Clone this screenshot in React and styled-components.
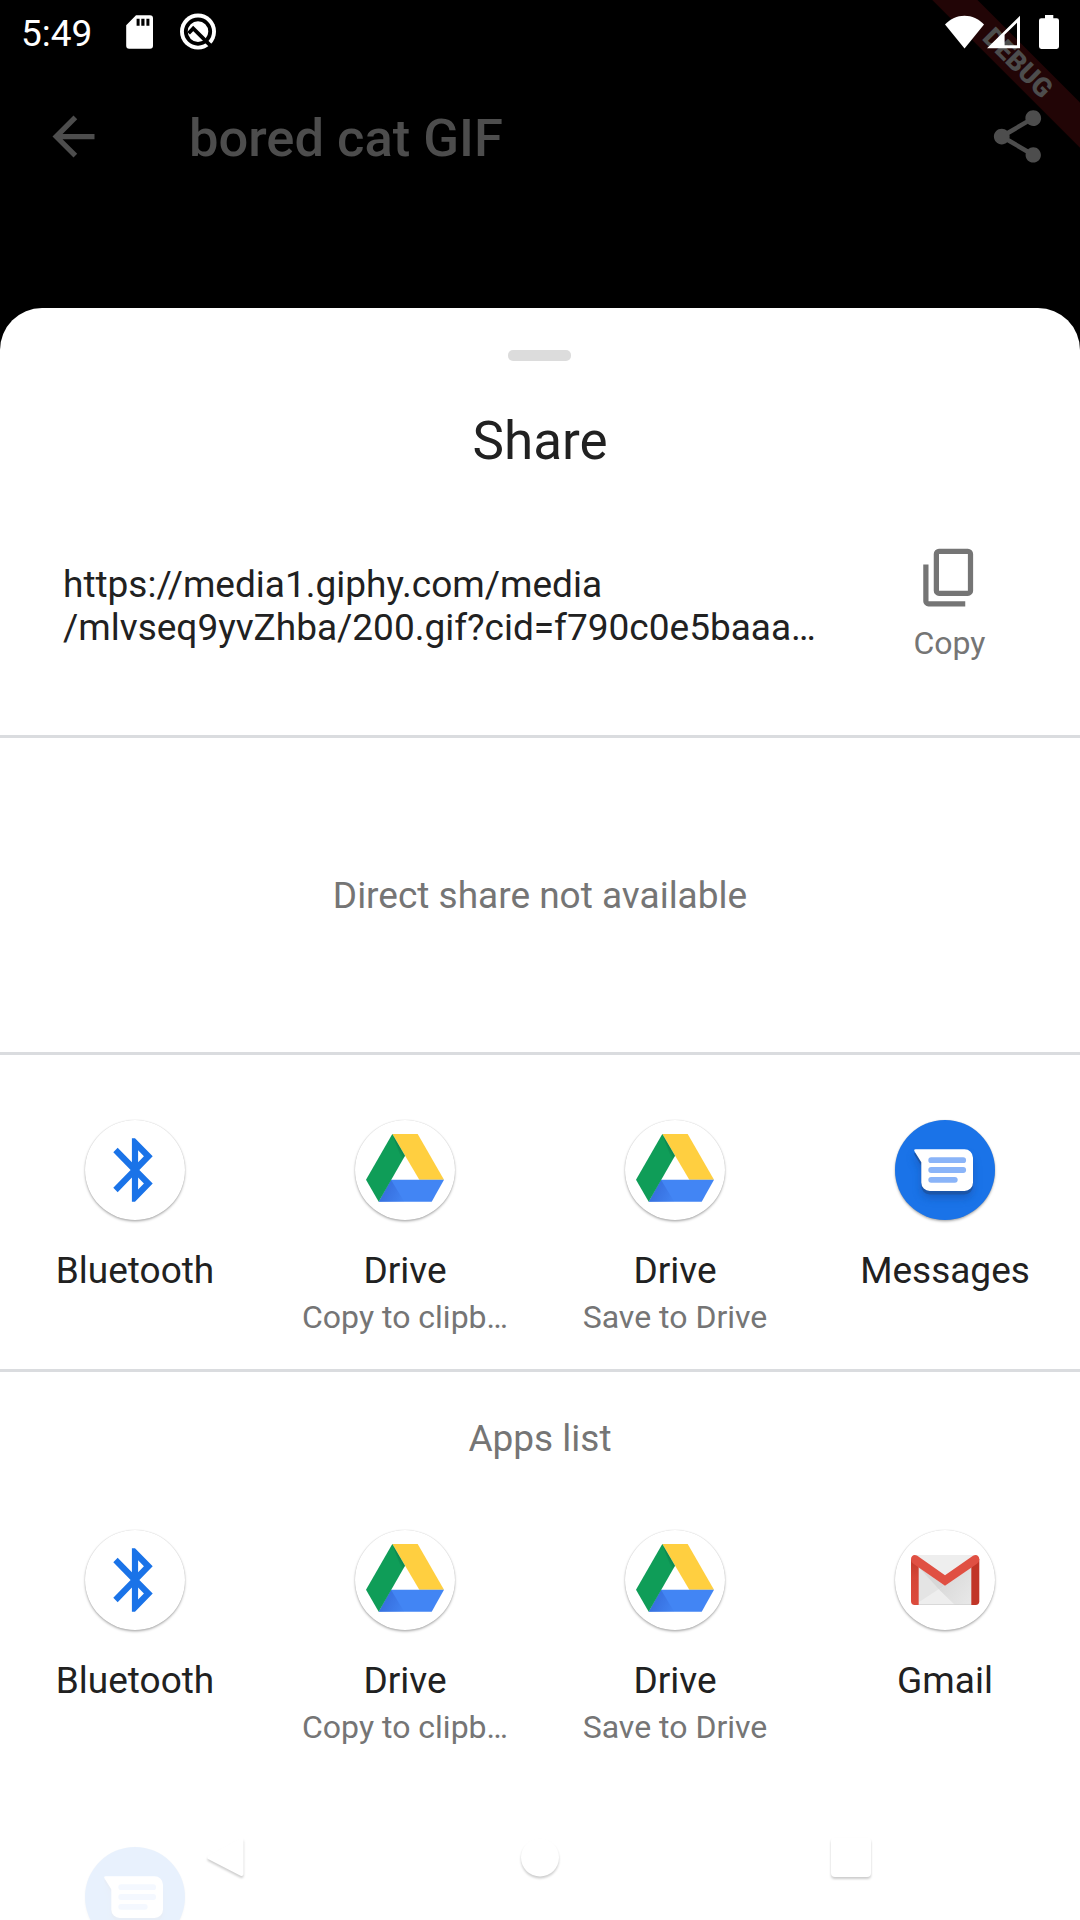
import React from "react";
import styled, { createGlobalStyle } from "styled-components";

const GlobalStyle = createGlobalStyle`
  *, *::before, *::after { box-sizing: border-box; }
  html, body { margin: 0; padding: 0; background: #000; }
  body { font-family: Roboto, "Noto Sans", sans-serif; -webkit-font-smoothing: antialiased; }
  svg { display: block; flex: none; }
`;

const Screen = styled.main`
  position: relative;
  display: flex;
  flex-direction: column;
  width: 1080px;
  height: 1920px;
  overflow: hidden;
  background: #000;
`;

const StatusBar = styled.header`
  position: relative;
  z-index: 1;
  display: flex;
  align-items: center;
  justify-content: space-between;
  flex: none;
  height: 63px;
  padding: 0 21px 0 21px;
`;

const StatusGroup = styled.div`
  display: flex;
  align-items: center;
`;

const Clock = styled.time`
  width: 105px;
  padding-top: 3px;
  font-size: 37px;
  line-height: 43px;
  color: #fff;
`;

const QIcon = styled.svg`
  margin-left: 27px;
`;

const BatteryIcon = styled.svg`
  margin-left: 19px;
`;

const AppBar = styled.div`
  display: flex;
  align-items: center;
  flex: none;
  height: 147px;
  padding: 0 31.5px 0 42px;
`;

const AppTitle = styled.h1`
  flex: 1;
  margin: 0;
  padding: 2px 0 0 84px;
  font-size: 52.5px;
  font-weight: 500;
  line-height: 62px;
  color: #4d4d4d;
`;

const DebugBanner = styled.div`
  position: absolute;
  top: 46.5px;
  left: 852.5px;
  width: 330px;
  height: 31.5px;
  transform: rotate(45deg);
  background: #220506;
  color: #4d4d4d;
  font-size: 26.8px;
  font-weight: 900;
  line-height: 32px;
  text-align: center;
`;

const Sheet = styled.section`
  display: flex;
  flex-direction: column;
  flex: none;
  height: 1612px;
  margin-top: 98px;
  overflow: hidden;
  border-radius: 42px 42px 0 0;
  background: #fff;
`;

const Handle = styled.div`
  flex: none;
  width: 63px;
  height: 11px;
  margin: 42px 0 0 508px;
  border-radius: 5px;
  background: #dcdcdc;
`;

const SheetTitle = styled.h2`
  margin: 49px 0 0;
  font-size: 53px;
  font-weight: 400;
  line-height: 62px;
  text-align: center;
  color: #212121;
`;

const LinkRow = styled.div`
  display: flex;
  justify-content: space-between;
  flex: none;
  height: 266px;
  padding: 74px 63px 0;
  border-bottom: 3px solid #dadcdf;
`;

const LinkText = styled.p`
  margin: 17px 0 0;
  font-size: 37px;
  line-height: 43px;
  white-space: nowrap;
  color: #212121;
`;

const CopyButton = styled.button`
  display: flex;
  flex-direction: column;
  align-items: center;
  width: 135px;
  height: 130px;
  padding: 0;
  border: 0;
  background: none;
  font: 400 32px/37px Roboto, "Noto Sans", sans-serif;
  color: #757575;

  svg { margin-right: 1px; }
  span { margin-top: 16px; }
`;

const DirectShare = styled.div`
  display: flex;
  align-items: center;
  justify-content: center;
  flex: none;
  height: 317px;
  border-bottom: 3px solid #dadcdf;
  font-size: 37px;
  line-height: 43px;
  color: #757575;
`;

const Targets = styled.div`
  display: grid;
  grid-template-columns: repeat(4, 270px);
  flex: none;
  height: 317px;
  padding-top: 65px;
  border-bottom: ${(p) => (p.$divided ? "3px solid #dadcdf" : "0")};
`;

const Target = styled.div`
  display: flex;
  flex-direction: column;
  align-items: center;
`;

const IconCircle = styled.div`
  width: 100px;
  height: 100px;
  border-radius: 50%;
  background: ${(p) => p.$fill};
  box-shadow: 0 0 1px rgba(0, 0, 0, 0.2), 0 1.5px 2.5px rgba(0, 0, 0, 0.3);
`;

const TargetName = styled.div`
  margin-top: 29px;
  font-size: 37px;
  line-height: 43px;
  color: #212121;
`;

const TargetDetail = styled.div`
  margin-top: 7px;
  font-size: 32px;
  line-height: 37px;
  color: #757575;
`;

const ListHeading = styled.h3`
  flex: none;
  height: 93px;
  margin: 0;
  padding-top: 45px;
  font-size: 37px;
  font-weight: 400;
  line-height: 43px;
  text-align: center;
  color: #757575;
`;

const NavBar = styled.nav`
  position: absolute;
  right: 0;
  bottom: 0;
  left: 0;
  display: flex;
  justify-content: center;
  gap: 241px;
  height: 126px;
  padding-top: 29px;
  background: rgba(255, 255, 255, 0.9);
`;

const NavIcon = styled.svg`
  overflow: visible;
  filter: drop-shadow(0 2.5px 1.3px rgba(0, 0, 0, 0.2));
`;

function BluetoothGlyph() {
  return (
    <svg width="100" height="100" viewBox="0 0 100 100">
      <path
        fill="#1a73e8"
        transform="matrix(3.1 0 0 3.18 12.8 11.8)"
        d="M17.71 7.71 12 2h-1v7.59L6.41 5 5 6.41 10.59 12 5 17.59 6.41 19 11 14.41V22h1l5.71-5.71-4.3-4.29 4.3-4.29zM13 5.83l1.88 1.88L13 9.59V5.83zm1.88 10.46L13 18.17v-3.76l1.88 1.88z"
      />
    </svg>
  );
}

function DriveGlyph({ id }) {
  return (
    <svg width="100" height="100" viewBox="0 0 100 100">
      <defs>
        <linearGradient id={`${id}-blue`} x1="28" y1="70" x2="48" y2="80" gradientUnits="userSpaceOnUse">
          <stop offset="0" stopColor="#3367d6" stopOpacity=".75" />
          <stop offset="1" stopColor="#3367d6" stopOpacity=".08" />
        </linearGradient>
        <linearGradient id={`${id}-green`} x1="46" y1="27" x2="41" y2="30" gradientUnits="userSpaceOnUse">
          <stop offset="0" stopColor="#07603a" stopOpacity=".45" />
          <stop offset="1" stopColor="#07603a" stopOpacity="0" />
        </linearGradient>
      </defs>
      <path fill="#ffcf40" d="M37.3 14h25.4L89 59.7H64.3z" />
      <path fill="#4285f4" d="M36 59.7h53L76.7 81.7h-53z" />
      <path fill={`url(#${id}-blue)`} d="M36 59.7 49.3 81.7H23.7z" />
      <path fill="#0f9d58" d="M37.3 14 50 35.7l-26.3 46L11 59.7z" />
      <path fill={`url(#${id}-green)`} d="M37.3 14 50 35.7l-3 5.2z" />
    </svg>
  );
}

function MessagesGlyph({ id }) {
  const bubble =
    "M20.7 29.3H69.5a8.5 8.5 0 0 1 8.5 8.5V62.5a8.5 8.5 0 0 1-8.5 8.5H34.8a8.5 8.5 0 0 1-8.5-8.5V42.3l-6.7-10.8q-1.2-2.2 1.1-2.2z";
  return (
    <svg width="100" height="100" viewBox="0 0 100 100">
      <defs>
        <filter id={`${id}-blur`} x="-30%" y="-30%" width="160%" height="170%">
          <feGaussianBlur stdDeviation="4" />
        </filter>
      </defs>
      <path d={bubble} transform="translate(0 7)" fill="#174ea6" opacity=".55" filter={`url(#${id}-blur)`} />
      <path d={bubble} transform="translate(0 3.5)" fill="#1b55a8" />
      <path d={bubble} fill="#fff" />
      <g stroke="#8ab4f8" strokeWidth="5.8" strokeLinecap="round">
        <path d="M36.2 40.2h32M36.2 50h32M36.2 59.8h23.6" />
      </g>
    </svg>
  );
}

function GmailGlyph() {
  return (
    <svg width="100" height="100" viewBox="0 0 100 100">
      <defs>
        <linearGradient id="gmail-side" x1="0" y1="0" x2="0" y2="1">
          <stop offset="0" stopColor="#c33a2c" />
          <stop offset=".4" stopColor="#d54637" />
          <stop offset="1" stopColor="#dc4b3d" />
        </linearGradient>
        <linearGradient id="gmail-shade" x1="50" y1="50" x2="84" y2="75" gradientUnits="userSpaceOnUse">
          <stop offset="0" stopColor="#dadada" />
          <stop offset="1" stopColor="#ebebeb" />
        </linearGradient>
      </defs>
      <path fill="#eeeeee" d="M20 25h60v50H20z" />
      <path fill="#e4e4e4" d="M23.7 37.3v35L44 59z" />
      <path fill="#d7d7d7" d="M23.7 37.3 50 55.7 44 59.5z" />
      <path fill="url(#gmail-shade)" d="M50 55.7 76.5 37.3V75H60L44 59.5z" />
      <path fill="#d2d2d2" d="M23.7 74.3h52.8v.7H23.7z" />
      <path fill="url(#gmail-side)" d="M16 29v42.3a3.7 3.7 0 0 0 3.7 3.7h4V34z" />
      <path fill="#c13527" d="M84.3 29v42.3a3.7 3.7 0 0 1-3.7 3.7h-4.3V34z" />
      <path
        fill="#e05043"
        d="M50 45.3 22.3 25.8C19 23.7 16 26 16 29.2q0 3 2.3 4.5L50 55.7l32-22q2.3-1.5 2.3-4.5c0-3.2-3-5.5-6.3-3.4z"
      />
    </svg>
  );
}

function TargetIcon({ kind, id }) {
  const fill = kind === "messages" ? "#1a73e8" : "#fff";
  return (
    <IconCircle $fill={fill}>
      {kind === "bluetooth" && <BluetoothGlyph />}
      {kind === "drive" && <DriveGlyph id={id} />}
      {kind === "messages" && <MessagesGlyph id={id} />}
      {kind === "gmail" && <GmailGlyph />}
    </IconCircle>
  );
}

const common = [
  { kind: "bluetooth", name: "Bluetooth" },
  { kind: "drive", name: "Drive", detail: "Copy to clipb…" },
  { kind: "drive", name: "Drive", detail: "Save to Drive" },
];
const suggested = [...common, { kind: "messages", name: "Messages" }];
const apps = [...common, { kind: "gmail", name: "Gmail" }];

function TargetRow({ items, prefix, divided }) {
  return (
    <Targets $divided={divided}>
      {items.map((item, i) => (
        <Target key={i}>
          <TargetIcon kind={item.kind} id={`${prefix}${i}`} />
          {item.name && <TargetName>{item.name}</TargetName>}
          {item.detail && <TargetDetail>{item.detail}</TargetDetail>}
        </Target>
      ))}
    </Targets>
  );
}

export default function App() {
  return (
    <Screen>
      <GlobalStyle />
      <DebugBanner>DEBUG</DebugBanner>
      <StatusBar>
        <StatusGroup>
          <Clock>5:49</Clock>
          <svg width="27" height="34" viewBox="0 0 27 34">
            <path
              fill="#fff"
              fillRule="evenodd"
              d="M10 .3h14a3 3 0 0 1 3 3v27.4a3 3 0 0 1-3 3H3.2a3 3 0 0 1-3-3V10.2zM10.6 3.8v7h3v-7zM15.3 3.8v7h3.2v-7zM20.4 3.8v7h3v-7z"
            />
          </svg>
          <QIcon width="36" height="37" viewBox="0 0 36 37">
            <circle cx="18" cy="18.5" r="18" fill="#fff" />
            <circle cx="18" cy="18.6" r="12.2" fill="none" stroke="#000" strokeWidth="3.8" />
            <path d="M8.6 20.2 13.2 15.4 31 33.2" fill="none" stroke="#000" strokeWidth="3.8" />
          </QIcon>
        </StatusGroup>
        <StatusGroup>
          <svg width="39" height="34" viewBox="0 0 39 34">
            <path fill="#fff" d="M19.5 33.4 0 9.6C5.5 3.8 12 .7 19.5.7S33.5 3.8 39 9.6z" />
          </svg>
          <svg width="36" height="34" viewBox="0 0 36 34">
            <path fill="#fff" fillRule="evenodd" d="M3 33.2 36 .8v32.4zM20.6 19.8v10.5h12.4V7.8z" />
          </svg>
          <BatteryIcon width="20" height="34" viewBox="0 0 20 34">
            <path
              fill="#fff"
              d="M6 0h8.3v3.3h3.4A2.3 2.3 0 0 1 20 5.6v26a2.3 2.3 0 0 1-2.3 2.3H2.3A2.3 2.3 0 0 1 0 31.6v-26a2.3 2.3 0 0 1 2.3-2.3H6z"
            />
          </BatteryIcon>
        </StatusGroup>
      </StatusBar>
      <AppBar>
        <svg width="63" height="63" viewBox="0 0 24 24">
          <path fill="#4d4d4d" d="M20 11H7.83l5.59-5.59L12 4l-8 8 8 8 1.41-1.41L7.83 13H20z" />
        </svg>
        <AppTitle>bored cat GIF</AppTitle>
        <svg width="63" height="63" viewBox="0 0 24 24">
          <path
            fill="#4d4d4d"
            d="M18 16.08c-.76 0-1.44.3-1.96.77L8.91 12.7c.05-.23.09-.46.09-.7s-.04-.47-.09-.7l7.05-4.11c.54.5 1.25.81 2.04.81 1.66 0 3-1.34 3-3s-1.34-3-3-3-3 1.34-3 3c0 .24.04.47.09.7L8.04 9.81C7.5 9.31 6.79 9 6 9c-1.66 0-3 1.34-3 3s1.34 3 3 3c.79 0 1.5-.31 2.04-.81l7.12 4.16c-.05.21-.08.43-.08.65 0 1.61 1.31 2.92 2.92 2.92s2.92-1.31 2.92-2.92-1.31-2.92-2.92-2.92z"
          />
        </svg>
      </AppBar>
      <Sheet>
        <Handle />
        <SheetTitle>Share</SheetTitle>
        <LinkRow>
          <LinkText>
            https://media1.giphy.com/media
            <br />
            /mlvseq9yvZhba/200.gif?cid=f790c0e5baaa…
          </LinkText>
          <CopyButton>
            <svg width="63" height="63" viewBox="0 0 24 24">
              <path
                fill="#757575"
                fillRule="evenodd"
                d="M8 1h11a2 2 0 0 1 2 2v14a2 2 0 0 1-2 2H8a2 2 0 0 1-2-2V3a2 2 0 0 1 2-2zm0 2v14h11V3zM2 7v14a2 2 0 0 0 2 2h14v-2H4V7z"
              />
            </svg>
            <span>Copy</span>
          </CopyButton>
        </LinkRow>
        <DirectShare>Direct share not available</DirectShare>
        <TargetRow items={suggested} prefix="s" divided />
        <ListHeading>Apps list</ListHeading>
        <TargetRow items={apps} prefix="a" />
        <TargetRow items={[{ kind: "messages" }]} prefix="m" />
      </Sheet>
      <NavBar>
        <NavIcon width="70" height="60" viewBox="0 0 70 60">
          <path fill="#fff" stroke="#fff" strokeWidth="4" strokeLinejoin="round" d="M15.5 34.5 47.5 17v34z" />
        </NavIcon>
        <NavIcon width="70" height="60" viewBox="0 0 70 60">
          <circle cx="35" cy="34.5" r="19" fill="#fff" />
        </NavIcon>
        <NavIcon width="70" height="60" viewBox="0 0 70 60">
          <rect x="15" y="14.5" width="40" height="39.5" rx="4" fill="#fff" />
        </NavIcon>
      </NavBar>
    </Screen>
  );
}
